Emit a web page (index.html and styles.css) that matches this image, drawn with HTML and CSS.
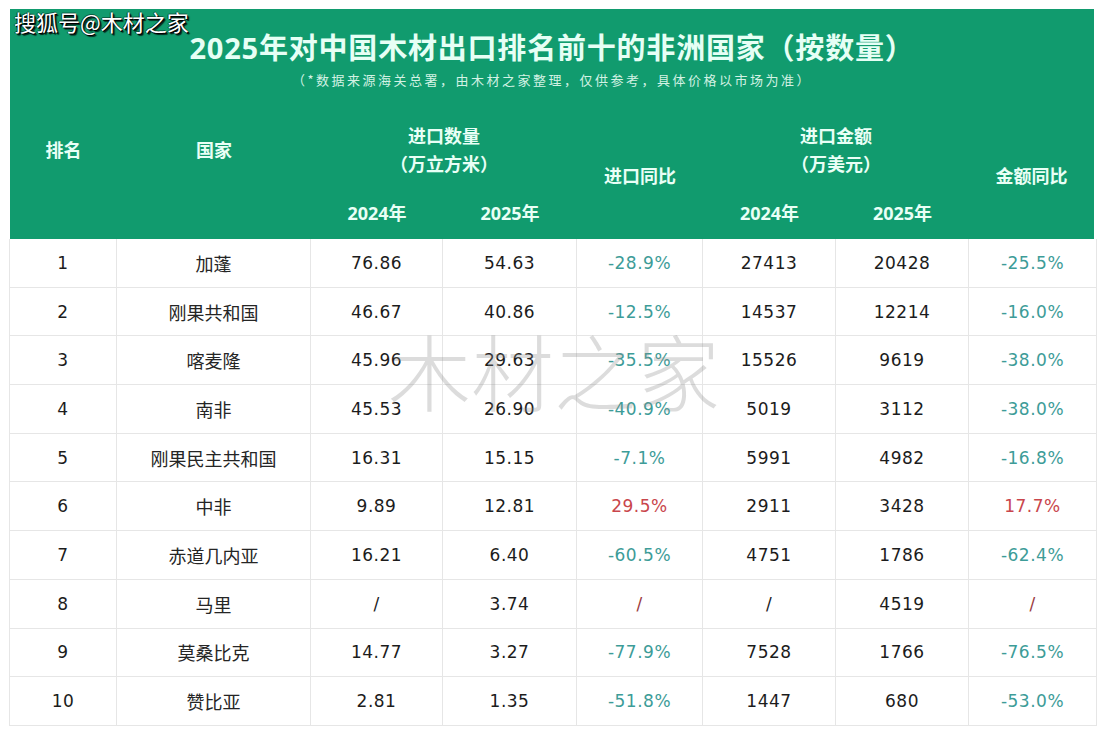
FILE: index.html
```html
<!DOCTYPE html>
<html lang="zh-CN">
<head>
<meta charset="utf-8">
<title>2025年对中国木材出口排名前十的非洲国家</title>
<link rel="stylesheet" href="styles.css">
</head>
<body>
<div class="page">
  <div class="card">
    <div class="head">
      <h1 class="title">2025年对中国木材出口排名前十的非洲国家（按数量）</h1>
      <p class="sub">（*数据来源海关总署，由木材之家整理，仅供参考，具体价格以市场为准）</p>
      <div class="hgrid">
        <div class="h span2 c1">排名</div>
        <div class="h span2 c2">国家</div>
        <div class="h grp c34">进口数量</div>
        <div class="h unit c34">（万立方米）</div>
        <div class="h year c3">2024年</div>
        <div class="h year c4">2025年</div>
        <div class="h span3 c5">进口同比</div>
        <div class="h grp c67">进口金额</div>
        <div class="h unit c67">（万美元）</div>
        <div class="h year c6">2024年</div>
        <div class="h year c7">2025年</div>
        <div class="h span3 c8">金额同比</div>
      </div>
    </div>
    <div class="body">
      <div class="cell num">1</div><div class="cell cn">加蓬</div><div class="cell num">76.86</div><div class="cell num">54.63</div><div class="cell pct neg">-28.9%</div><div class="cell num">27413</div><div class="cell num">20428</div><div class="cell pct neg">-25.5%</div>
      <div class="cell num">2</div><div class="cell cn">刚果共和国</div><div class="cell num">46.67</div><div class="cell num">40.86</div><div class="cell pct neg">-12.5%</div><div class="cell num">14537</div><div class="cell num">12214</div><div class="cell pct neg">-16.0%</div>
      <div class="cell num">3</div><div class="cell cn">喀麦隆</div><div class="cell num">45.96</div><div class="cell num">29.63</div><div class="cell pct neg">-35.5%</div><div class="cell num">15526</div><div class="cell num">9619</div><div class="cell pct neg">-38.0%</div>
      <div class="cell num">4</div><div class="cell cn">南非</div><div class="cell num">45.53</div><div class="cell num">26.90</div><div class="cell pct neg">-40.9%</div><div class="cell num">5019</div><div class="cell num">3112</div><div class="cell pct neg">-38.0%</div>
      <div class="cell num">5</div><div class="cell cn">刚果民主共和国</div><div class="cell num">16.31</div><div class="cell num">15.15</div><div class="cell pct neg">-7.1%</div><div class="cell num">5991</div><div class="cell num">4982</div><div class="cell pct neg">-16.8%</div>
      <div class="cell num">6</div><div class="cell cn">中非</div><div class="cell num">9.89</div><div class="cell num">12.81</div><div class="cell pct pos">29.5%</div><div class="cell num">2911</div><div class="cell num">3428</div><div class="cell pct pos">17.7%</div>
      <div class="cell num">7</div><div class="cell cn">赤道几内亚</div><div class="cell num">16.21</div><div class="cell num">6.40</div><div class="cell pct neg">-60.5%</div><div class="cell num">4751</div><div class="cell num">1786</div><div class="cell pct neg">-62.4%</div>
      <div class="cell num">8</div><div class="cell cn">马里</div><div class="cell num">/</div><div class="cell num">3.74</div><div class="cell pct na">/</div><div class="cell num">/</div><div class="cell num">4519</div><div class="cell pct na">/</div>
      <div class="cell num">9</div><div class="cell cn">莫桑比克</div><div class="cell num">14.77</div><div class="cell num">3.27</div><div class="cell pct neg">-77.9%</div><div class="cell num">7528</div><div class="cell num">1766</div><div class="cell pct neg">-76.5%</div>
      <div class="cell num">10</div><div class="cell cn">赞比亚</div><div class="cell num">2.81</div><div class="cell num">1.35</div><div class="cell pct neg">-51.8%</div><div class="cell num">1447</div><div class="cell num">680</div><div class="cell pct neg">-53.0%</div>
    </div>
  </div>
  <div class="sohu">搜狐号@木材之家</div>
  <div class="wm">木材之家</div>
</div>
</body>
</html>
```
FILE: styles.css
```css
html, body {
  margin: 0;
  padding: 0;
  background: #ffffff;
}
body {
  font-family: "Noto Sans", "Noto Sans CJK SC", sans-serif;
}
.page {
  position: relative;
  width: 1108px;
  height: 738px;
  padding: 9px 0 0 10px;
  box-sizing: border-box;
  overflow: hidden;
}
.card {
  width: 1084px;
}
.head {
  background: #119b6e;
  padding: 21px 0 10px;
  height: 230px;
  box-sizing: border-box;
  color: #e9fff6;
}
.title {
  margin: 0;
  text-align: center;
  font-family: "Noto Sans", "Noto Sans CJK SC", sans-serif;
  font-weight: 700;
  font-size: 29px;
  line-height: 36px;
  color: #e6fff5;
  letter-spacing: 0.8px;
}
.sub {
  margin: 5px 0 0;
  text-align: center;
  font-family: "Noto Sans CJK SC", sans-serif;
  font-size: 13px;
  line-height: 18px;
  letter-spacing: 2.5px;
  color: #d3f2e4;
}
.hgrid {
  margin-top: 32px;
  display: grid;
  grid-template-columns: 107px 194px 132px 134px 126px 133px 133px 125px;
  grid-template-rows: 28px 28px 52px;
  font-family: "Noto Sans", "Noto Sans CJK SC", sans-serif;
  font-weight: 700;
  font-size: 18px;
  color: #e9fff6;
}
.h {
  display: flex;
  align-items: center;
  justify-content: center;
  white-space: nowrap;
}
.span2 { grid-row: 1 / 3; }
.span3 { grid-row: 1 / 4; }
.grp { grid-row: 1; }
.unit { grid-row: 2; }
.year { grid-row: 3; align-items: flex-end; padding-bottom: 4px; }
.c1 { grid-column: 1; }
.c2 { grid-column: 2; }
.c3 { grid-column: 3; }
.c4 { grid-column: 4; }
.c34 { grid-column: 3 / 5; }
.c5 { grid-column: 5; }
.c6 { grid-column: 6; }
.c7 { grid-column: 7; }
.c67 { grid-column: 6 / 8; }
.c8 { grid-column: 8; }

.body {
  display: grid;
  grid-template-columns: 107px 194px 132px 134px 126px 133px 133px 128px;
  grid-auto-rows: 48.7px;
  border-left: 1px solid #e6e6e6;
  width: 1087px;
  box-sizing: border-box;
  margin-left: -1px;
}
.cell {
  display: flex;
  align-items: center;
  justify-content: center;
  border-right: 1px solid #e6e6e6;
  border-bottom: 1px solid #e6e6e6;
  font-family: "DejaVu Sans", sans-serif;
  font-size: 17px;
  letter-spacing: 0.5px;
  color: #1c1c1c;
  white-space: nowrap;
}
.cn {
  font-family: "Noto Sans CJK SC", sans-serif;
  font-size: 18px;
  letter-spacing: 0;
  color: #252525;
}
.pct {
  color: #3d9c98;
}
.pct.pos {
  color: #c9464c;
}
.pct.na {
  color: #9b3b40;
}

.sohu {
  position: absolute;
  left: 14px;
  top: 6px;
  font-family: "Noto Sans CJK SC", sans-serif;
  font-size: 22px;
  line-height: 30px;
  color: #ffffff;
  text-shadow: 1px 1px 0 #000, 2px 2px 1px rgba(0,0,0,0.8), -1px 0 0 rgba(0,0,0,0.5), 0 -1px 0 rgba(0,0,0,0.4);
}
.wm {
  position: absolute;
  left: 388px;
  top: 320px;
  font-family: "Noto Sans CJK SC", sans-serif;
  font-weight: 300;
  font-size: 83px;
  line-height: 98px;
  color: rgba(140, 140, 140, 0.3);
  pointer-events: none;
}
```
